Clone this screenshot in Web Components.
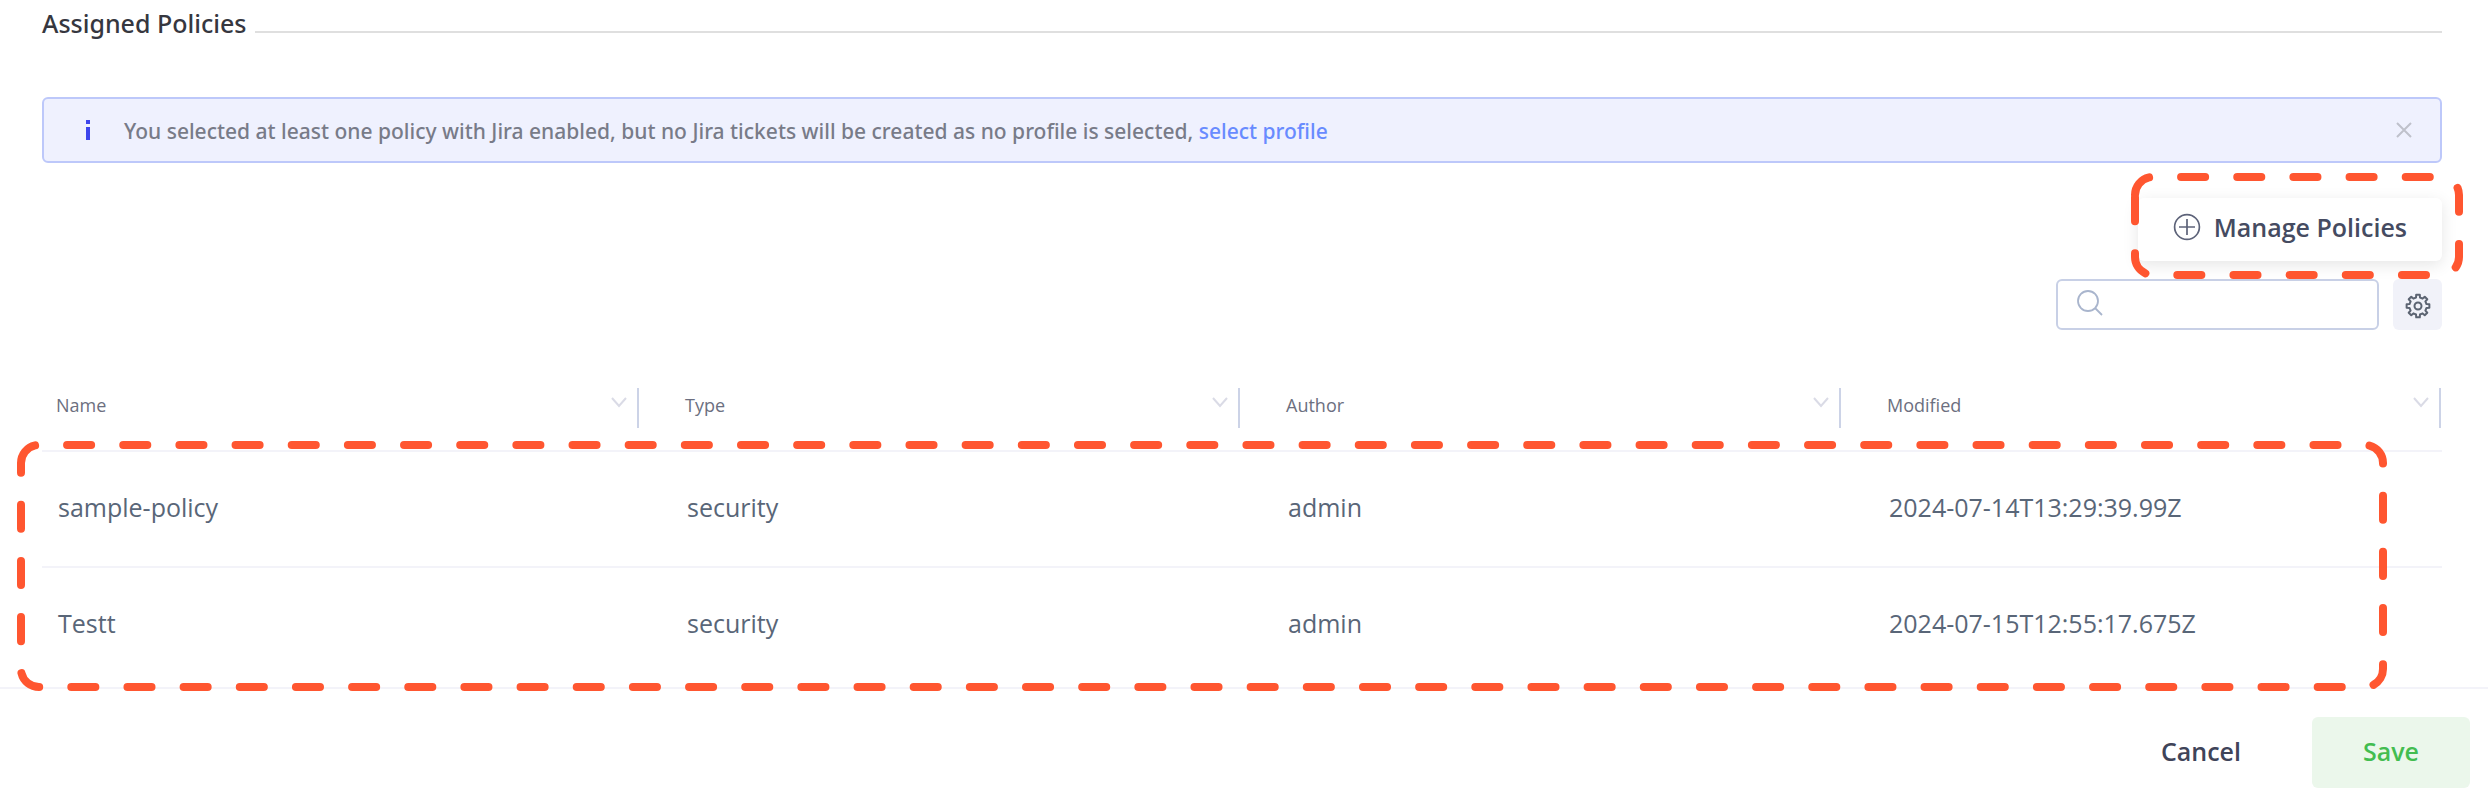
<!DOCTYPE html>
<html lang="en">
<head>
<meta charset="utf-8">
<title>Assigned Policies</title>
<style>
  body {
    margin: 0;
    background: #fff;
    color: #596678;
    font: 400 25px/32px "Open Sans", "Noto Sans", sans-serif;
  }
</style>
</head>
<body>
<policy-page>
  <section-title>Assigned Policies</section-title>
  <info-alert>You selected at least one policy with Jira enabled, but no Jira tickets will be created as no profile is selected, <a href="#profile">select profile</a></info-alert>
  <policy-toolbar></policy-toolbar>
  <policy-table></policy-table>
  <form-footer slot="footer"></form-footer>
</policy-page>

<script>
const define = (name, html, setup) => {
  const template = document.createElement('template');
  template.innerHTML = '<style>:host,*{box-sizing:border-box}button,input{font:inherit;margin:0}svg{display:block;flex:none}</style>' + html;
  customElements.define(name, class extends HTMLElement {
    constructor() {
      super();
      this.attachShadow({ mode: 'open' }).append(template.content.cloneNode(true));
      if (setup) setup(this, this.shadowRoot);
    }
  });
};

/* Dashed rounded outline that follows the size of its own box. */
define('dashed-callout', `
<style>
  :host { position: absolute; display: block; pointer-events: none; z-index: 2; }
  svg { position: absolute; inset: 0; width: 100%; height: 100%; overflow: visible; }
  path { fill: none; stroke: #ff5630; stroke-width: 8; stroke-linecap: round; stroke-dasharray: 24.07 32.09; }
</style>
<svg aria-hidden="true"><path/></svg>`, (host, root) => {
  const path = root.querySelector('path');
  new ResizeObserver(() => {
    const r = 18, w = host.offsetWidth - 8, h = host.offsetHeight - 8;
    path.setAttribute('d', `M4 ${4 + r}a${r} ${r} 0 0 1 ${r} ${-r}h${w - 2 * r}a${r} ${r} 0 0 1 ${r} ${r}v${h - 2 * r}a${r} ${r} 0 0 1 ${-r} ${r}h${2 * r - w}a${r} ${r} 0 0 1 ${-r} ${-r}z`);
  }).observe(host);
});

define('section-title', `
<style>
  :host { display: flex; align-items: flex-end; gap: 8px; }
  h2 { margin: 0; font: 500 25px/32px "Noto Sans", sans-serif; color: #36373f; }
  hr { flex: 1; margin: 0 0 6px; border: 0; height: 2px; background: #dfdfdf; }
</style>
<h2><slot></slot></h2><hr>`);

define('info-alert', `
<style>
  :host { display: flex; align-items: center; height: 66px; margin-top: 58px; padding: 0 28px 0 41px;
    border: 2px solid #bdc8fa; border-radius: 6px; background: #eff1fe; }
  p { flex: 1; margin: 0 0 0 33px; padding-top: 2px; font: 500 21px/32px "Noto Sans", sans-serif; color: #787b88; }
  ::slotted(a) { color: #688bff; text-decoration: none; }
  button { padding: 0; border: 0; background: none; }
</style>
<svg width="6" height="20" fill="#3d45ec" aria-hidden="true"><path d="M1 0h4v4H1zM1 7h4v13H1z"/></svg>
<p><slot></slot></p>
<button type="button" aria-label="Dismiss"><svg width="16" height="16" stroke="#bfc1cb" stroke-width="2"><path d="M1 1l14 14M15 1L1 15"/></svg></button>`);

define('policy-toolbar', `
<style>
  :host { display: flex; flex-direction: column; align-items: flex-end; gap: 18px; margin-top: 35px; }
  .manage { position: relative; }
  .manage button { display: flex; align-items: center; gap: 13px; height: 63px; padding: 0 35px 6px; border: 0;
    border-radius: 6px; background: #fff; color: #454b61; font-weight: 600; box-shadow: 0 4px 16px rgb(0 0 0 / 10%); }
  dashed-callout { inset: -25px -21px -18px -7px; }
  .tools { display: flex; gap: 14px; }
  .search { display: flex; align-items: center; width: 323px; height: 51px; padding: 0 8px 0 18px;
    border: 2px solid #c8d0e6; border-radius: 6px; background: #fff; }
  input { flex: 1; min-width: 0; border: 0; outline: 0; background: none; color: inherit; }
  .search svg { margin-bottom: 4px; }
  .gear { display: grid; place-items: center; width: 49px; height: 51px; padding: 2px 0 0 1px; border: 0; border-radius: 6px; background: #f1f2f9; }
</style>
<div class="manage">
  <button type="button"><svg width="28" height="28" fill="none" stroke="#5d6379" stroke-width="1.7"><circle cx="14" cy="14" r="12.4"/><path d="M14 6v16M6 14h16"/></svg>Manage Policies</button>
  <dashed-callout></dashed-callout>
</div>
<div class="tools">
  <label class="search"><svg width="28" height="28" fill="none" stroke="#a9b5cd" stroke-width="1.8"><circle cx="12" cy="12" r="10"/><path d="M19 19l7 7"/></svg><input type="text" aria-label="Search policies"></label>
  <button class="gear" type="button" aria-label="Table settings"><svg width="26" height="26" viewBox="-13 -13 26 26" fill="none" stroke="#5c6472" stroke-width="2" stroke-linejoin="round"><path class="teeth"/><circle r="3.5"/></svg></button>
</div>`, (host, root) => {
  /* Eight-toothed cog: each tooth is a short arc on the outer radius. */
  const points = [];
  for (let i = 0; i < 8; i++) {
    for (const [offset, radius] of [[-13, 8.7], [-9, 11.5], [9, 11.5], [13, 8.7]]) {
      const a = (i * 45 + offset) * Math.PI / 180;
      points.push((radius * Math.cos(a)).toFixed(2) + ' ' + (radius * Math.sin(a)).toFixed(2));
    }
  }
  root.querySelector('.teeth').setAttribute('d', 'M' + points.join('L') + 'z');
});

define('policy-table', `
<style>
  :host { display: block; position: relative; margin-top: 58px; }
  table { width: 100%; table-layout: fixed; border-collapse: separate; border-spacing: 0; }
  th, td { padding: 0 0 0 46px; text-align: left; font-weight: 400; }
  th:first-child { width: 597px; }
  th:first-child, td:first-child { padding-left: 14px; }
  th { height: 62px; vertical-align: top; font-size: 18px; line-height: 34px; color: #6c6f80; }
  th div { display: flex; justify-content: space-between; height: 40px; padding-right: 10px; border-right: 2px solid #ccd3e7; }
  th:last-child { padding-right: 1px; }
  th svg { margin-top: 9px; }
  td { height: 116px; border-top: 2px solid #f3f3f9; padding-bottom: 4px; }
  td span { margin-left: 2px; }
  dashed-callout { inset: 53px 55px -9px -25px; }
</style>
<table>
  <thead><tr></tr></thead>
  <tbody></tbody>
</table>
<dashed-callout></dashed-callout>`, (host, root) => {
  const chevron = '<svg width="16" height="11" fill="none" stroke="#dadbe6" stroke-width="2" aria-hidden="true"><path d="M1 1l7 8 7-8"/></svg>';
  root.querySelector('thead tr').innerHTML = ['Name', 'Type', 'Author', 'Modified']
    .map(label => `<th scope="col"><div>${label}${chevron}</div></th>`).join('');
  root.querySelector('tbody').innerHTML = [
    ['sample-policy', 'security', 'admin', '2024-07-14T13:29:39.99Z'],
    ['Testt', 'security', 'admin', '2024-07-15T12:55:17.675Z'],
  ].map(row => '<tr>' + row.map(cell => `<td><span>${cell}</span></td>`).join('') + '</tr>').join('');
});

define('form-footer', `
<style>
  :host { display: flex; justify-content: flex-end; margin-top: 5px; padding: 28px 18px 13px; border-top: 2px solid #f3f3f9; }
  button { height: 71px; padding: 0 51px 4px; border: 0; border-radius: 6px; font-weight: 600; }
  .cancel { padding-right: 71px; background: none; color: #3f4459; }
  .save { background: #ebf7eb; color: #43bd50; }
</style>
<button class="cancel" type="button">Cancel</button>
<button class="save" type="submit">Save</button>`);

define('policy-page', `
<style>
  :host { display: block; }
  main { padding: 7px 46px 0 42px; }
</style>
<main><slot></slot></main>
<slot name="footer"></slot>`);
</script>
</body>
</html>
